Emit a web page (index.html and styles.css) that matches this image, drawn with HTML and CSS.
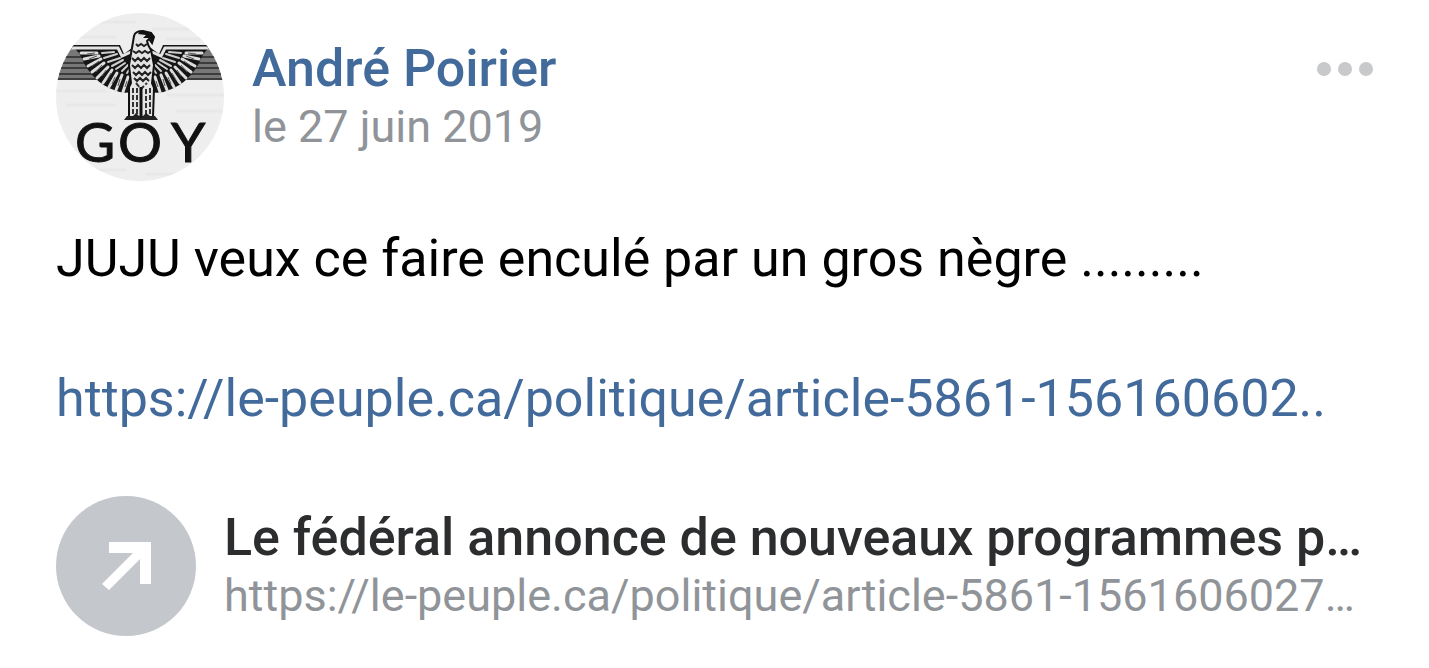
FILE: index.html
```html
<!DOCTYPE html>
<html lang="fr">
<head>
  <meta charset="UTF-8">
  <meta name="viewport" content="width=device-width, initial-scale=1">
  <title>André Poirier</title>
  <link rel="stylesheet" href="styles.css">
</head>
<body>

  <article class="post">
    <header class="post-header">
      <svg class="avatar" viewBox="0 0 168 168" role="img" aria-label="Avatar">
        <defs>
          <clipPath id="round"><circle cx="84" cy="84" r="84"/></clipPath>
          <g id="wing">
            <path d="M12 32H64L68 41L76 35V79Q66 81 58 77Q47 73 40 66Q31 57 27 48Q24 40 19 36H12Z" fill="#161616"/>
            <path d="M0 35H62L66 43L75 39" fill="none" stroke="#e2e2e2" stroke-width="3"/>
            <!-- long feathers -->
            <path d="M41 40L25 40M43 43L28 46M45 46L32 53M48 50L36 59M52 54L41 65M56 57L47 70M61 60L53 74M66 62L60 77M72 64L67 79" stroke="#dedede" stroke-width="3" stroke-linecap="round"/>
            <path d="M39 40L31 41M41 43L33 46M43 48L36 53M46 52L40 59M50 57L46 63M55 60L51 67M59 64L56 71M64 66L62 73M71 68L69 74" stroke="#555" stroke-width="1"/>
            <!-- short feathers -->
            <path d="M58 39L46 40M61 41L48 45M64 45L52 49M67 47L56 53M69 50L60 56M72 52L66 58M75 54L71 60" stroke="#cecece" stroke-width="2" stroke-linecap="round"/>
          </g>
        </defs>
        <g clip-path="url(#round)">
          <rect width="168" height="168" fill="#eee"/>
          <path d="M0 9H80M96 16H168M20 24H60M110 26H150M0 78H50M110 82H168M10 92H60M120 98H168M0 157H70M90 161H150" stroke="#e8e8e8" stroke-width="3"/>
          <path d="M0 32H168V67H0Z" fill="#777"/>
          <path d="M0 33H168M0 44H168M0 50H168M0 55H168M0 61H168M0 66H168" stroke="#3c3c3c" stroke-width="2"/>
          <path d="M43 68L40 64L64 31L68 30H104L108 31L131 64L128 68Z" fill="#eee"/>
          <use href="#wing"/>
          <use href="#wing" transform="matrix(-1 0 0 1 171 0)"/>
          <!-- head and body -->
          <path d="M76 35L78 23Q79 18 87 18L95 20L98 24L96 30L93 26L91 28Q92 33 95 37L98 52L96 70L98 75L97 104H73V74L75 70L73 52Z" fill="#e4e4e4" stroke="#111" stroke-width="2"/>
          <path d="M84 18L95 20L98 24L96 29L93 25L87 25L90 22L82 21Z" fill="#111"/>
          <path d="M80 31l2 2 3-2 3 2 3-2M77 38l3 2 3-2 3 2 3-2 3 2 3-2M76 45l3 3 3-3 3 3 3-3 3 3 3-3M76 52l3 3 3-3 3 3 3-3 3 3 3-3M77 59l3 3 3-3 3 3 3-3 3 3 3-3M78 65l3 3 3-3 3 3 3-3 3 3" fill="none" stroke="#222" stroke-width="2"/>
          <path d="M80 70L85 76L91 70M77 75V101M81 75V101M90 76V101M94 75V101" fill="none" stroke="#333" stroke-width="2" stroke-dasharray="5 2"/>
          <path d="M85 74V106" stroke="#111" stroke-width="3"/>
          <path d="M68 107L71 103L77 103L80 100L85 105L90 100L94 103L99 103L102 107Z" fill="#222"/>
          <text class="avatar-text" x="19 62 115" y="149">GOY</text>
        </g>
      </svg>
      <div class="author">
        <a class="name" href="#">André Poirier</a>
        <time class="meta" datetime="2019-06-27">le 27 juin 2019</time>
      </div>
      <button class="more" type="button" aria-label="Plus">
        <span class="dot"></span>
        <span class="dot"></span>
        <span class="dot"></span>
      </button>
    </header>

    <div class="post-text">
      <p>JUJU veux ce faire enculé par un gros nègre .........</p>
      <p><a href="#">https://le-peuple.ca/politique/article-5861-156160602..</a></p>
    </div>

    <a class="attachment" href="#">
      <svg class="attachment-icon" viewBox="0 0 140 140" aria-hidden="true">
        <circle cx="70" cy="70" r="70" fill="#c4c7cc"/>
        <path d="M53 46H95V88H84V63L53 94L46 88L77 57H53Z" fill="#fff"/>
      </svg>
      <div class="attachment-info">
        <div class="attachment-title">Le fédéral annonce de nouveaux programmes p…</div>
        <div class="meta">https://le-peuple.ca/politique/article-5861-1561606027…</div>
      </div>
    </a>
  </article>

</body>
</html>
```
FILE: styles.css
```css
body {
  margin: 0;
  background: #fff;
  color: #000;
  font-family: Roboto, sans-serif;
}

a {
  color: #426a9b;
  text-decoration: none;
}

.post {
  padding: 13px 56px 32px;
}

.post-header {
  display: flex;
  align-items: flex-start;
}

.avatar {
  flex: none;
  width: 168px;
  height: 168px;
}

.avatar-text {
  font-family: Lato, sans-serif;
  font-size: 55px;
  fill: #111;
  stroke: #111;
  stroke-width: 1px;
}

.author {
  flex: 1;
  padding: 26px 0 0 28px;
}

.name {
  display: block;
  font-size: 52px;
  font-weight: 500;
  line-height: 60px;
}

.meta {
  display: block;
  color: #909499;
  font-size: 45px;
  line-height: 56px;
}

.more {
  display: flex;
  gap: 7px;
  margin-top: 49px;
  padding: 0;
  border: none;
  background: none;
  cursor: pointer;
}

.dot {
  width: 14px;
  height: 14px;
  border-radius: 50%;
  background: #c8c9cb;
}

.post-text {
  margin-top: 43px;
  font-size: 52px;
  line-height: 70px;
}

.post-text p {
  margin: 0 0 70px;
}

.attachment {
  display: flex;
  margin-top: -8px;
}

.attachment-icon {
  flex: none;
  width: 140px;
  height: 140px;
}

.attachment-info {
  flex: 1;
  min-width: 0;
  padding: 12px 0 0 28px;
  white-space: nowrap;
}

.attachment-title {
  color: #2c2d2e;
  font-size: 52px;
  font-weight: 500;
  line-height: 60px;
}
```
